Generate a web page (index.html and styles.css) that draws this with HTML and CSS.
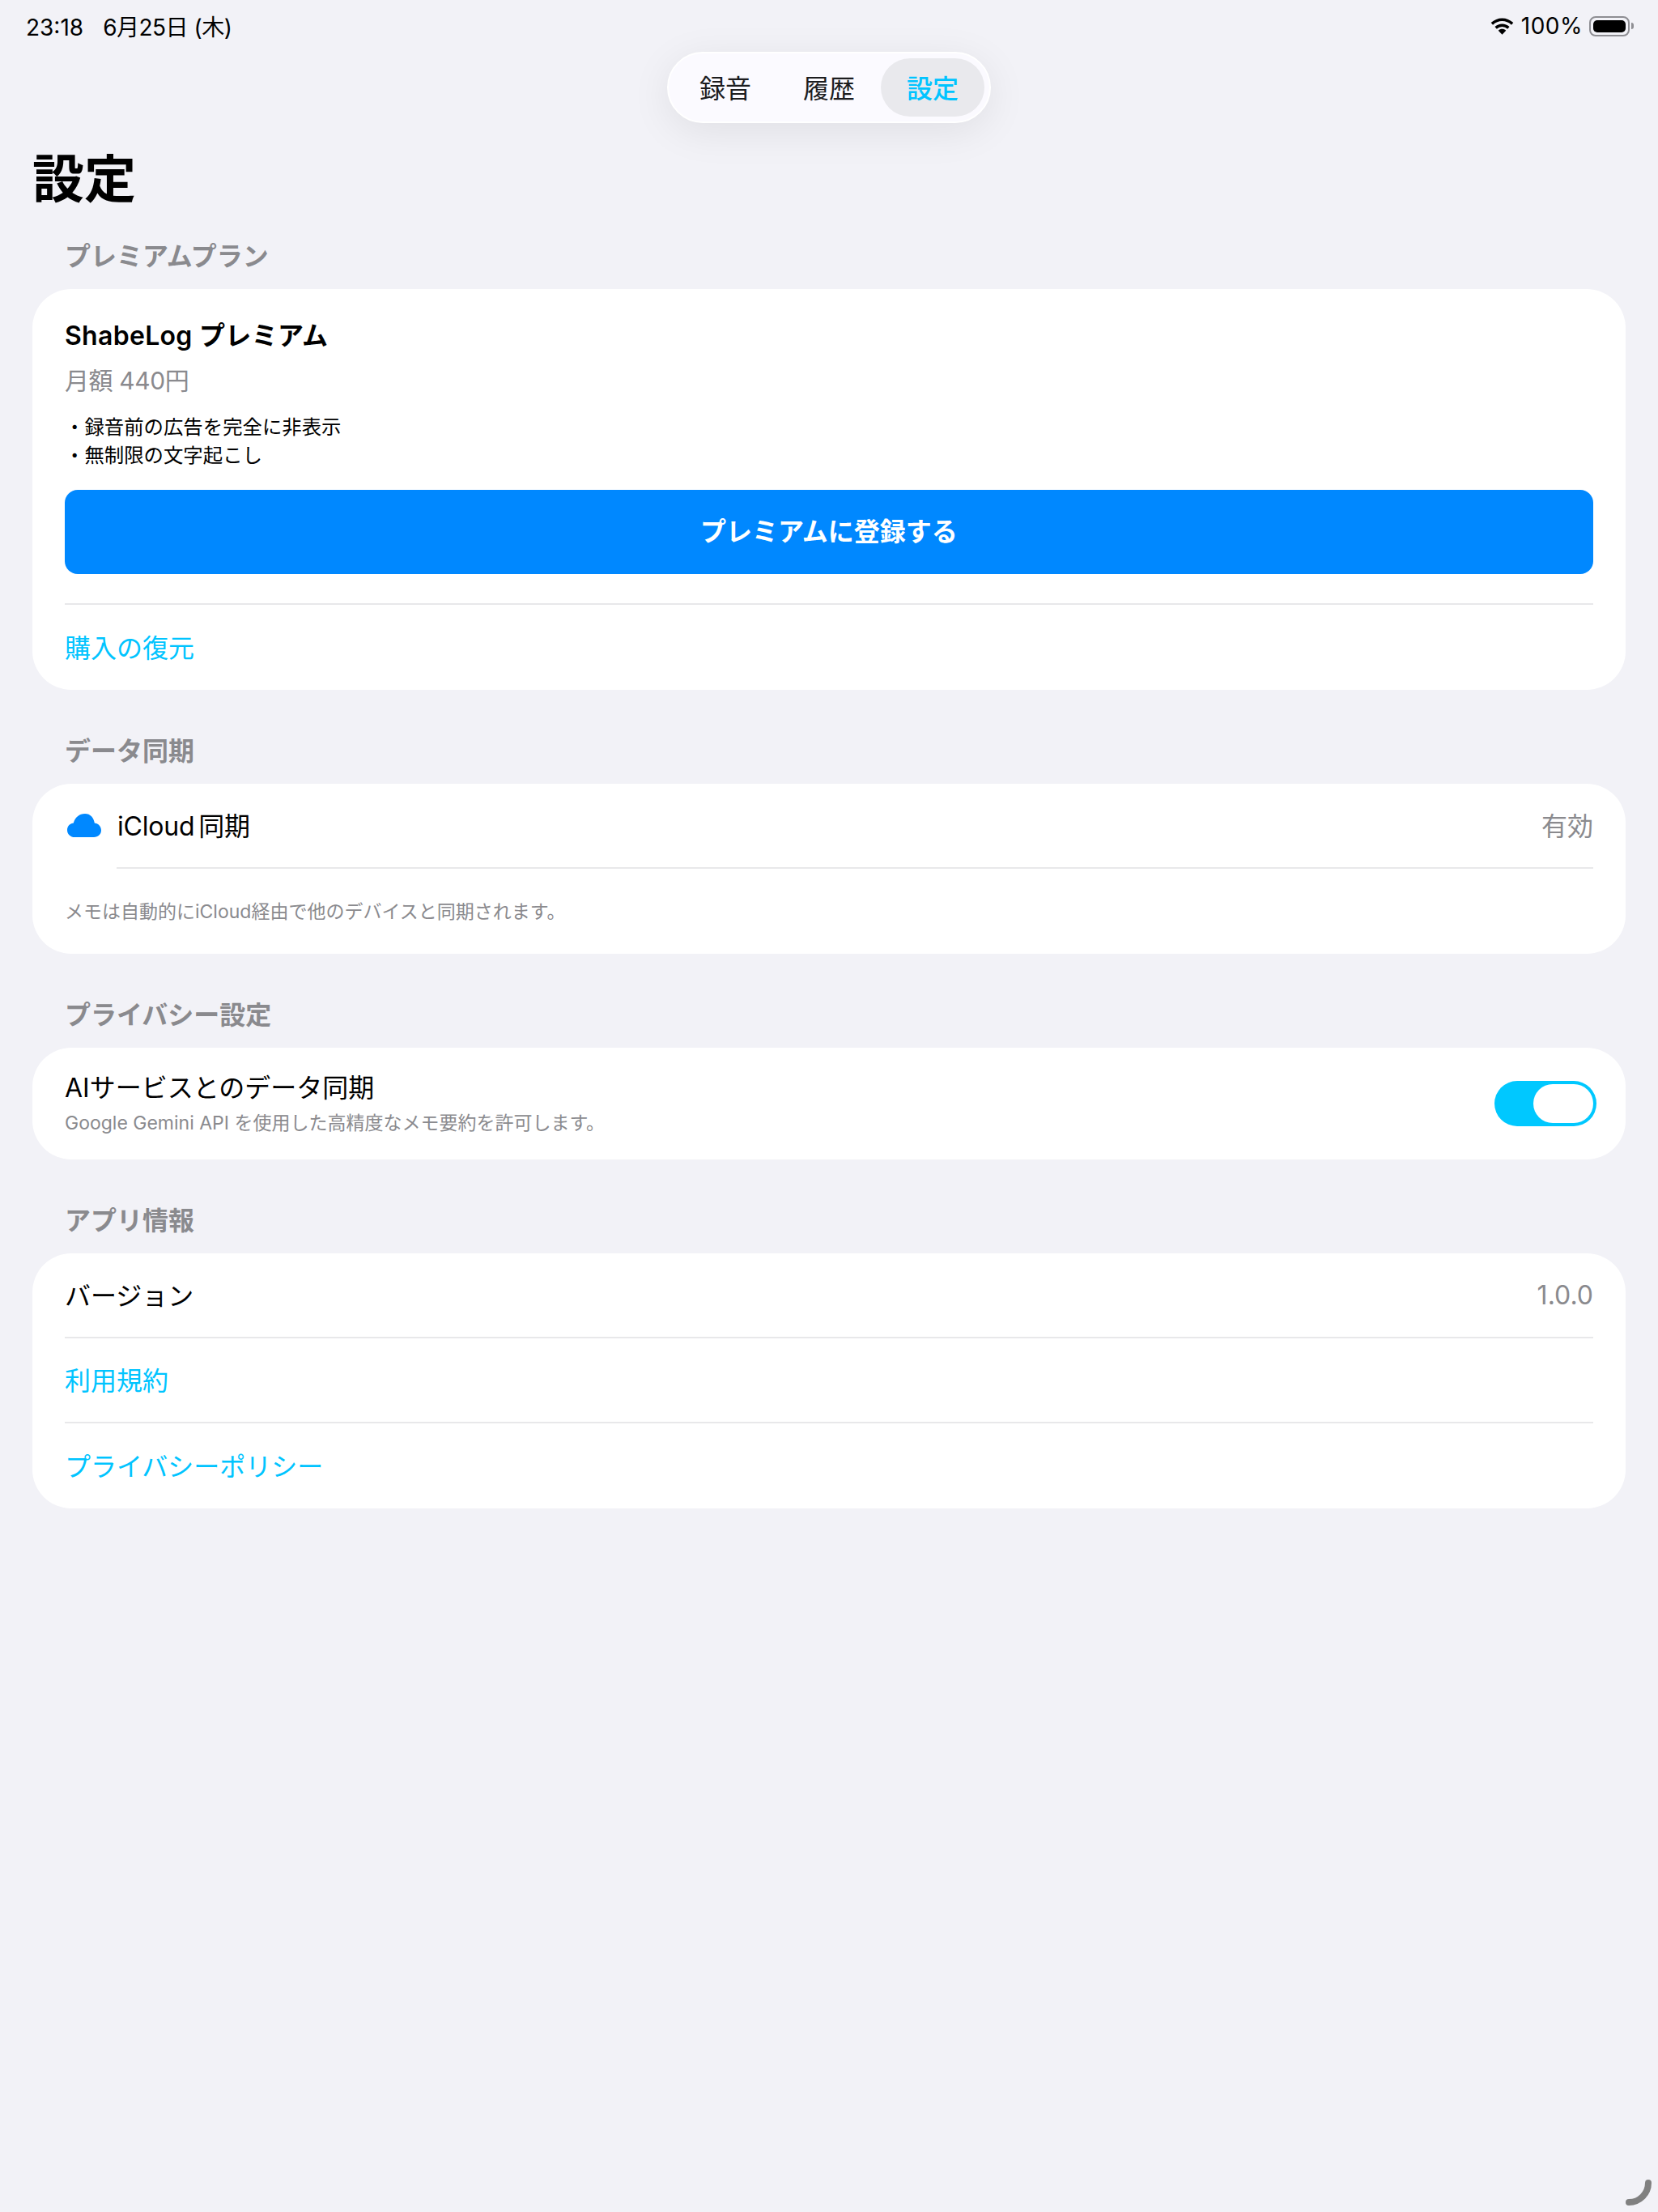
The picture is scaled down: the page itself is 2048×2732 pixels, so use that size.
FILE: index.html
```html
<!DOCTYPE html>
<html lang="ja">
<head>
    <meta charset="UTF-8">
    <title>設定</title>
    <link rel="stylesheet" href="styles.css">
</head>
<body>
<div class="status-bar">
    <div class="status-time"><span>23:18</span><span class="status-date">6月25日 (木)</span></div>
    <div class="status-right">
        <svg class="wifi" width="29" height="21" viewBox="0 0 28 20">
            <path d="M14 20 L9.4 15 C12.1 12.6 15.9 12.6 18.6 15 Z" fill="#000"/>
            <path d="M6.4 11.8 C10.8 7.8 17.2 7.8 21.6 11.8" fill="none" stroke="#000" stroke-width="3.4"/>
            <path d="M1.8 7 C9 0.4 19 0.4 26.2 7" fill="none" stroke="#000" stroke-width="3.4"/>
        </svg>
        <span class="battery-text">100%</span>
        <div class="battery"><div class="battery-fill"></div></div>
        <div class="battery-nub"></div>
    </div>
</div>

<nav class="tabs">
    <div class="tab">録音</div>
    <div class="tab">履歴</div>
    <div class="tab tab-active">設定</div>
</nav>

<main class="content">
    <h1 class="page-title">設定</h1>

    <h2 class="section-label first">プレミアムプラン</h2>
    <section class="card">
        <div class="plan">
            <div class="plan-title">ShabeLog プレミアム</div>
            <div class="plan-price">月額 440円</div>
            <div class="plan-features">
                <div>・録音前の広告を完全に非表示</div>
                <div>・無制限の文字起こし</div>
            </div>
            <button class="subscribe">プレミアムに登録する</button>
        </div>
        <div class="divider"></div>
        <div class="row row-restore link">購入の復元</div>
    </section>

    <h2 class="section-label">データ同期</h2>
    <section class="card">
        <div class="row row-icloud">
            <svg class="cloud" width="42" height="29" viewBox="0 0 42 29">
                <path d="M9.5 29 C4 29 0 25.2 0 20.2 C0 15.6 3.2 12.2 7.8 11.6 C9.6 4.6 15 0 22 0 C28.6 0 32.8 4.8 33.8 11.6 C38.6 12.2 42 15.8 42 20.6 C42 25.6 38.2 29 33 29 Z" fill="#0088ff"/>
            </svg>
            <span class="row-title">iCloud 同期</span>
            <span class="row-value row-value-jp">有効</span>
        </div>
        <div class="divider divider-inset"></div>
        <div class="row row-note">メモは自動的にiCloud経由で他のデバイスと同期されます。</div>
    </section>

    <h2 class="section-label">プライバシー設定</h2>
    <section class="card">
        <div class="row row-ai">
            <div>
                <div class="row-title-ai">AIサービスとのデータ同期</div>
                <div class="row-sub">Google Gemini API を使用した高精度なメモ要約を許可します。</div>
            </div>
            <div class="toggle"><div class="toggle-thumb"></div></div>
        </div>
    </section>

    <h2 class="section-label">アプリ情報</h2>
    <section class="card">
        <div class="row row-info">
            <span class="row-title">バージョン</span>
            <span class="row-value">1.0.0</span>
        </div>
        <div class="divider"></div>
        <div class="row row-info link">利用規約</div>
        <div class="divider"></div>
        <div class="row row-info row-last link">プライバシーポリシー</div>
    </section>
</main>

<svg class="resize-arc" width="32" height="32" viewBox="0 0 32 32">
    <path d="M28 4 A24 24 0 0 1 4 28" fill="none" stroke="#808080" stroke-width="8" stroke-linecap="round"/>
</svg>
</body>
</html>
```

FILE: styles.css
```css
* {
    box-sizing: border-box;
}

html, body {
    margin: 0;
    padding: 0;
}

body {
    position: relative;
    height: 2732px;
    overflow: hidden;
    background-color: #f2f2f7;
    color: #000;
    font-family: Inter, "Noto Sans CJK JP", sans-serif;
}

/* ステータスバー */
.status-bar {
    display: flex;
    justify-content: space-between;
    align-items: center;
    height: 64px;
    padding: 0 30px 0 32px;
    font-size: 28px;
}

.status-time {
    display: flex;
    align-items: baseline;
    gap: 24px;
}

.status-date {
    letter-spacing: -0.5px;
}

.status-right {
    display: flex;
    align-items: center;
}

.wifi {
    margin-right: 9px;
}

.battery-text {
    margin-right: 8px;
    letter-spacing: 0.5px;
}

.battery {
    width: 50px;
    height: 25px;
    padding: 3px;
    border: 2px solid #8e8e93;
    border-radius: 8px;
}

.battery-fill {
    width: 100%;
    height: 100%;
    background-color: #000;
    border-radius: 5px;
}

.battery-nub {
    width: 3px;
    height: 8px;
    margin-left: 2px;
    background-color: #8e8e93;
    border-radius: 0 3px 3px 0;
}

/* タブ */
.tabs {
    display: flex;
    width: 400px;
    height: 88px;
    margin: 0 auto;
    padding: 6px;
    background-color: #fbfaff;
    border: 2px solid #fff;
    border-radius: 44px;
    box-shadow: 0 10px 50px rgba(0, 0, 0, 0.08);
}

.tab {
    display: flex;
    align-items: center;
    justify-content: center;
    width: 128px;
    padding-bottom: 3px;
    border-radius: 36px;
    font-size: 32px;
    color: #1c1c1e;
}

.tab-active {
    background-color: #e9e9ed;
    color: #00c4ff;
    font-weight: 500;
}

.content {
    padding: 0 40px;
}

.page-title {
    margin: 33px 0 0 0;
    font-size: 64px;
    line-height: 72px;
    font-weight: 700;
}

.section-label {
    margin: 56px 0 20px 40px;
    font-size: 32px;
    line-height: 40px;
    font-weight: 600;
    color: #8a8a8e;
}

.section-label.first {
    margin-top: 40px;
}

.card {
    background-color: #fff;
    border-radius: 48px;
    overflow: hidden;
}

.plan {
    padding: 36px 40px 0;
}

.plan-title {
    font-size: 32px;
    line-height: 44px;
    font-weight: 600;
    letter-spacing: 0.3px;
}

.plan-price {
    margin-top: 13px;
    font-size: 30px;
    line-height: 40px;
    letter-spacing: -0.4px;
    color: #8a8a8e;
}

.plan-features {
    margin-top: 20px;
    font-size: 24.4px;
    line-height: 35px;
}

.subscribe {
    display: block;
    width: 100%;
    height: 104px;
    margin-top: 25px;
    padding: 0 0 6px;
    background-color: #0088ff;
    border: none;
    border-radius: 16px;
    color: #fff;
    font-family: inherit;
    font-size: 32px;
    font-weight: 700;
}

.divider {
    height: 2px;
    margin: 36px 40px 0;
    background-color: #e8e8ea;
}

.row + .divider,
.divider-inset {
    margin-top: 0;
}

.divider-inset {
    margin-left: 104px;
}

.row {
    display: flex;
    align-items: center;
    padding: 0 40px;
    font-size: 32px;
}

.row-title,
.row-value-jp {
    padding-bottom: 3px;
}

.link {
    padding-bottom: 4px;
    color: #00c4ff;
}

.row-restore {
    height: 105px;
}

.row-icloud {
    height: 103px;
}

.row-icloud .row-title {
    word-spacing: -4px;
    letter-spacing: -0.2px;
}

.cloud {
    margin-right: 20px;
    margin-left: 3px;
}

.row-value {
    margin-left: auto;
    color: #8a8a8e;
}

.row-note {
    height: 105px;
    padding-bottom: 4px;
    font-size: 23px;
    color: #8a8a8e;
}

.row-ai {
    justify-content: space-between;
    height: 138px;
}

.row-title-ai {
    line-height: 44px;
}

.row-sub {
    margin-top: 3px;
    font-size: 23px;
    line-height: 36px;
    color: #8a8a8e;
}

.toggle {
    width: 126px;
    height: 56px;
    margin-right: -4px;
    padding: 4px;
    display: flex;
    justify-content: flex-end;
    background-color: #00c8ff;
    border-radius: 28px;
}

.toggle-thumb {
    width: 74px;
    height: 48px;
    background-color: #fff;
    border-radius: 24px;
}

.row-info {
    height: 103px;
}

.row-last {
    height: 105px;
}

/* 右下のインジケータ */
.resize-arc {
    position: absolute;
    right: 8px;
    bottom: 8px;
}
```
